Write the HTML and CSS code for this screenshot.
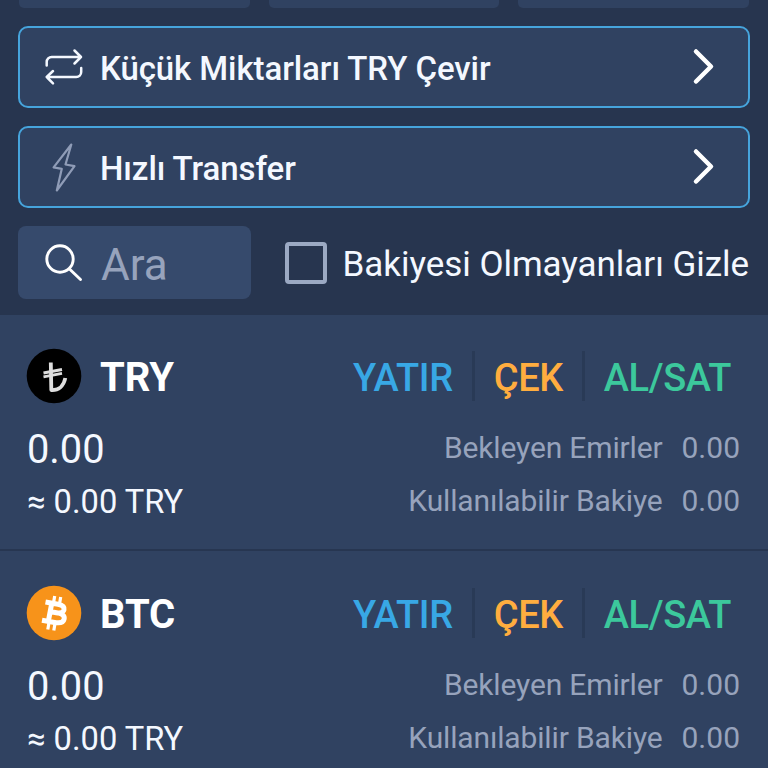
FILE: index.html
```html
<!DOCTYPE html>
<html lang="tr">
<head>
<meta charset="utf-8">
<title>Cüzdan</title>
<link rel="stylesheet" href="styles.css">
</head>
<body>
<header class="top">
  <div class="tabs"><div class="tab"></div><div class="tab"></div><div class="tab"></div></div>
  <div class="action">
    <svg class="action-icon" width="40" height="40" viewBox="0 0 40 40" fill="none" stroke="#f4f8ff" stroke-width="2.500" stroke-linecap="round" stroke-linejoin="round"><path d="M2.700 18.500V15a5 5 0 0 1 5-5H37M30.500 3.500 37 10l-6.500 6.500M37.200 21v4a5 5 0 0 1-5 5H2.700M9 24l-6.300 6 6.300 6.300"/></svg>
    <span class="action-label">Küçük Miktarları TRY Çevir</span>
    <svg class="chevron" width="24" height="40" viewBox="0 0 24 40" fill="none" stroke="#fff" stroke-width="4.500" stroke-linecap="round" stroke-linejoin="round"><path d="M4 4.500 19 19.500 4 34.500"/></svg>
  </div>
  <div class="action">
    <svg class="action-icon" width="40" height="52" viewBox="0 0 40 52" fill="none" stroke="#8f9cb7" stroke-width="2.200" stroke-linejoin="round"><path d="M27.300 3.500 9.600 26.300l8.200 1.500-5 21.700L30.500 25.200l-9-1.700Z"/></svg>
    <span class="action-label">Hızlı Transfer</span>
    <svg class="chevron" width="24" height="40" viewBox="0 0 24 40" fill="none" stroke="#fff" stroke-width="4.500" stroke-linecap="round" stroke-linejoin="round"><path d="M4 4.500 19 19.500 4 34.500"/></svg>
  </div>
  <div class="filters">
    <div class="search">
      <svg width="40" height="40" viewBox="0 0 40 40" fill="none" stroke="#fff" stroke-width="2.900" stroke-linecap="round"><circle cx="16" cy="16" r="13.200"/><path d="m25.500 26 11 10.500"/></svg>
      <span class="search-text">Ara</span>
    </div>
    <div class="hide"><span class="box"></span><span class="hide-label">Bakiyesi Olmayanları Gizle</span></div>
  </div>
</header>
<main>
  <section class="asset">
    <div class="head">
      <svg class="coin" width="56" height="56" viewBox="0 0 56 56" fill="none"><circle cx="28" cy="28" r="27.300" fill="#000"/><g stroke="#dedede"><path stroke-width="3.800" stroke-linejoin="round" d="M24.800 14.500l.5 27.500c7 .5 12.500-4 14-12"/><path stroke-width="2.900" d="m17.500 25 18.500-3.500M17.500 28.800l18.500-3.500"/></g></svg>
      <span class="symbol">TRY</span>
      <span class="act blue">YATIR</span><i class="sep"></i><span class="act orange">ÇEK</span><i class="sep"></i><span class="act green">AL/SAT</span>
    </div>
    <div class="row main-row"><span class="amount">0.00</span><span class="name">Bekleyen Emirler</span><span class="val">0.00</span></div>
    <div class="row sub-row"><span class="approx">≈ 0.00 TRY</span><span class="name">Kullanılabilir Bakiye</span><span class="val">0.00</span></div>
  </section>
  <section class="asset">
    <div class="head">
      <svg class="coin" width="56" height="56" viewBox="0 0 56 56" fill="none"><circle cx="28" cy="28" r="27.300" fill="#f7931a"/><g stroke="#fff" stroke-width="5"><path d="M19.500 17 32 19.200c5 1 6.500 3 6 5.600-.7 3-4 3.500-7.700 2.900l-5-.9 6.500 1.100c5 1 7 3.200 6.300 6.300-.8 3.400-4.500 4.200-9.500 3.300L16 35.200M25.800 18l-3.500 18.500"/><path stroke-width="3.200" d="m28.700 11-1.200 7M34.700 12l-1.200 7M23 37.500l-1.200 7M29 38.500l-1.200 7"/></g></svg>
      <span class="symbol">BTC</span>
      <span class="act blue">YATIR</span><i class="sep"></i><span class="act orange">ÇEK</span><i class="sep"></i><span class="act green">AL/SAT</span>
    </div>
    <div class="row main-row"><span class="amount">0.00</span><span class="name">Bekleyen Emirler</span><span class="val">0.00</span></div>
    <div class="row sub-row"><span class="approx">≈ 0.00 TRY</span><span class="name">Kullanılabilir Bakiye</span><span class="val">0.00</span></div>
  </section>
</main>
</body>
</html>
```
FILE: styles.css
```css
* { box-sizing: border-box; }
body {
  margin: 0;
  height: 768px;
  overflow: hidden;
  background: #304261;
  color: #f4f8ff;
  font-family: Roboto, "Liberation Sans", sans-serif;
}
.top {
  height: 315px;
  padding: 0 19px;
  background: #27354f;
}
.tabs { display: grid; grid-template-columns: repeat(3, 1fr); gap: 19px; height: 8px; }
.tab { background: #304261; border-radius: 0 0 5px 5px; }
.action {
  display: flex;
  align-items: center;
  height: 82px;
  margin: 18px -0.500px 0 -1px;
  padding: 0 32px 0 24px;
  border: 2px solid #46a4dc;
  border-radius: 10px;
  background: #304261;
}
.action-icon { flex: none; }
.action-label {
  flex: 1;
  margin-left: 16px;
  padding-top: 3px;
  font-size: 33px;
  font-weight: 500;
  line-height: 40px;
  letter-spacing: -0.080px;
  white-space: nowrap;
}
.filters { display: flex; align-items: center; height: 73px; margin-top: 18px; }
.search {
  display: flex;
  align-items: center;
  width: 233px;
  height: 73px;
  margin-left: -1px;
  padding-left: 26px;
  border-radius: 8px;
  background: #364a6c;
}
.search svg { flex: none; }
.search-text { margin: 4px 0 0 17px; font-size: 44px; line-height: 50px; color: #97a3bc; }
.hide { display: flex; align-items: center; margin-left: 34px; white-space: nowrap; }
.box { flex: none; width: 42px; height: 42px; border: 4px solid #9ba9c3; border-radius: 4px; }
.hide-label { margin: 5px 0 0 16px; font-size: 35px; line-height: 40px; letter-spacing: -0.040px; }
.asset { height: 237px; padding: 33px 28px 0 26px; }
.asset:first-child { height: 236px; border-bottom: 2px solid #273651; }
.asset + .asset { padding-top: 34px; }
.head { display: flex; align-items: center; height: 56px; padding-right: 9px; }
.coin { flex: none; }
.symbol { flex: 1; margin: 4px 0 0 18px; font-size: 40px; font-weight: 700; line-height: 46px; letter-spacing: -0.100px; color: #fff; }
.act { margin-top: 3px; font-size: 38px; font-weight: 500; line-height: 46px; letter-spacing: -0.400px; }
.blue { color: #38a8e5; }
.orange { color: #ffad3f; }
.green { color: #3cc89c; }
.sep { width: 3px; height: 50px; margin: 0 19px; background: #293a56; }
.row { display: flex; align-items: center; white-space: nowrap; }
.main-row { height: 52px; margin-top: 18px; }
.sub-row { height: 52px; margin-top: 1px; }
.amount { flex: 1; margin: 2px 0 0 1px; font-size: 39.800px; }
.approx { flex: 1; margin: 2px 0 0 1px; font-size: 32.700px; }
.name, .val { font-size: 30px; color: #97a3bc; }
.name { letter-spacing: -0.150px; }
.main-row .name, .main-row .val, .sub-row .name, .sub-row .val { margin-top: -1px; }
.val { margin-left: 19px; }
```
